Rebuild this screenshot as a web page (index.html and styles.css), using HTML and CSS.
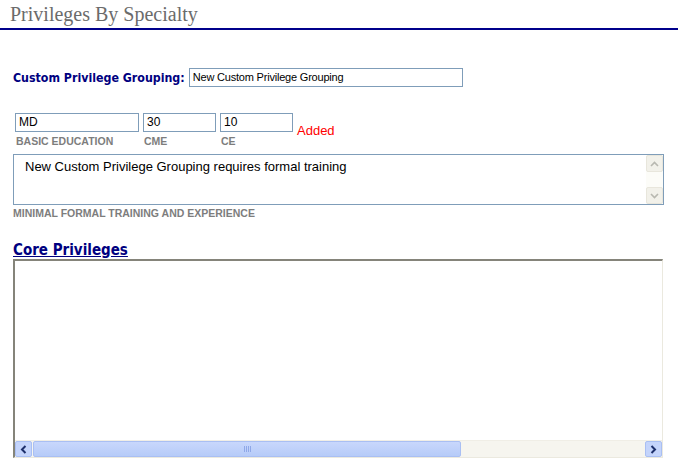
FILE: index.html
```html
<!DOCTYPE html>
<html>
<head>
<meta charset="utf-8">
<link rel="stylesheet" href="styles.css">
</head>
<body>
<div class="header"><h1 class="title">Privileges By Specialty</h1></div>
<div class="content">
  <div class="group-row">
    <label class="group-label">Custom Privilege Grouping:</label>
    <div class="text-input wide">New Custom Privilege Grouping</div>
  </div>
  <div class="fields-row">
    <div class="field">
      <div class="text-input small w-edu">MD</div>
      <span class="field-label">BASIC EDUCATION</span>
    </div>
    <div class="field">
      <div class="text-input small w-num">30</div>
      <span class="field-label">CME</span>
    </div>
    <div class="field">
      <div class="text-input small w-num">10</div>
      <span class="field-label">CE</span>
    </div>
    <span class="added">Added</span>
  </div>
  <div class="textarea">
    <div class="textarea-text">New Custom Privilege Grouping requires formal training</div>
    <div class="vscroll">
      <div class="vbtn"><svg width="9" height="6" viewBox="0 0 9 6"><path d="M1 5 L4.5 1.5 L8 5" fill="none" stroke="#b8b8b0" stroke-width="1.6"/></svg></div>
      <div class="vtrack"></div>
      <div class="vbtn"><svg width="9" height="6" viewBox="0 0 9 6"><path d="M1 1 L4.5 4.5 L8 1" fill="none" stroke="#b8b8b0" stroke-width="1.6"/></svg></div>
    </div>
  </div>
  <div class="field-label block">MINIMAL FORMAL TRAINING AND EXPERIENCE</div>
  <h2 class="section-title"><a href="#">Core Privileges</a></h2>
  <div class="grid-box">
    <div class="grid-body"></div>
    <div class="hscroll">
      <div class="hbtn"><svg width="7" height="9" viewBox="0 0 7 9"><path d="M5.5 1 L2 4.5 L5.5 8" fill="none" stroke="#1d2f6b" stroke-width="2"/></svg></div>
      <div class="hthumb"><span class="grip"></span></div>
      <div class="htrack"></div>
      <div class="hbtn"><svg width="7" height="9" viewBox="0 0 7 9"><path d="M1.5 1 L5 4.5 L1.5 8" fill="none" stroke="#1d2f6b" stroke-width="2"/></svg></div>
    </div>
  </div>
</div>
</body>
</html>
```
FILE: styles.css
```css
* { box-sizing: border-box; }
body {
  margin: 0;
  background: #ffffff;
  font-family: "Liberation Sans", Arial, sans-serif;
}
.header {
  height: 30px;
  border-bottom: 2px solid #00008b;
  padding-left: 10px;
}
.title {
  margin: 0;
  font-family: "Liberation Serif", "Times New Roman", serif;
  font-weight: normal;
  font-size: 20px;
  line-height: 28px;
  color: #6b6b6b;
}
.content {
  padding-left: 13px;
}
.group-row {
  display: flex;
  align-items: center;
  margin-top: 38px;
  gap: 4px;
}
.group-label {
  font-family: "DejaVu Sans Condensed", "DejaVu Sans", Verdana, sans-serif;
  font-stretch: condensed;
  font-weight: bold;
  font-size: 12.3px;
  color: #000080;
}
.text-input {
  border: 1px solid #7f9db9;
  background: #fff;
  height: 19px;
  font-size: 12px;
  line-height: 17px;
  padding-left: 3px;
  color: #000;
  white-space: nowrap;
}
.wide {
  width: 274px;
  font-size: 11px;
  letter-spacing: -0.2px;
}
.fields-row {
  display: flex;
  align-items: flex-start;
  margin-top: 26px;
  padding-left: 2px;
  gap: 4px;
}
.field {
  display: flex;
  flex-direction: column;
}
.w-edu { width: 124px; }
.w-num { width: 73px; }
.field-label {
  font-size: 10.5px;
  font-weight: bold;
  color: #7d7d7d;
  line-height: 14px;
  padding-left: 1px;
  margin-top: 2px;
}
.field-label.block {
  display: block;
  padding-left: 0;
  margin-top: 1px;
}
.added {
  color: #ff0000;
  font-size: 13px;
  margin-top: 10px;
}
.textarea {
  display: flex;
  width: 651px;
  height: 51px;
  margin-top: 6px;
  border: 1px solid #7f9db9;
  background: #fff;
}
.textarea-text {
  flex: 1;
  font-size: 13px;
  padding: 4px 0 0 11px;
  color: #000;
}
.vscroll {
  width: 17px;
  display: flex;
  flex-direction: column;
  background: #fcfcf8;
}
.vbtn {
  height: 17px;
  background: #f2f1ea;
  border: 1px solid #e8e6dc;
  border-radius: 2px;
  display: flex;
  align-items: center;
  justify-content: center;
}
.vtrack { flex: 1; }
.section-title {
  margin: 22px 0 0 0;
  font-family: "DejaVu Sans Condensed", "DejaVu Sans", Verdana, sans-serif;
  font-stretch: condensed;
  font-size: 15px;
  line-height: 17px;
  font-weight: bold;
}
.section-title a {
  color: #000080;
  text-decoration: underline;
}
.grid-box {
  width: 650px;
  height: 199px;
  margin-top: 0;
  border-top: 2px solid #85847a;
  border-left: 2px solid #85847a;
  border-right: 1px solid #ebe9df;
  border-bottom: 1px solid #ebe9df;
  display: flex;
  flex-direction: column;
}
.grid-body { flex: 1; background: #fff; }
.hscroll {
  height: 17px;
  display: flex;
  background: #f6f5ef;
  border-top: 1px solid #f0eee6;
}
.hbtn {
  width: 17px;
  background: #c4d4fb;
  border: 1px solid #a9bff3;
  border-radius: 2px;
  display: flex;
  align-items: center;
  justify-content: center;
}
.hthumb {
  width: 428px;
  margin-left: 1px;
  background: linear-gradient(#c8d7fc, #b6cbf8);
  border: 1px solid #a9bff3;
  border-radius: 2px;
  display: flex;
  align-items: center;
  justify-content: center;
}
.grip {
  width: 7px;
  height: 6px;
  background: repeating-linear-gradient(90deg, #8fa8e8 0 1px, transparent 1px 2px);
}
.htrack { flex: 1; }
```
